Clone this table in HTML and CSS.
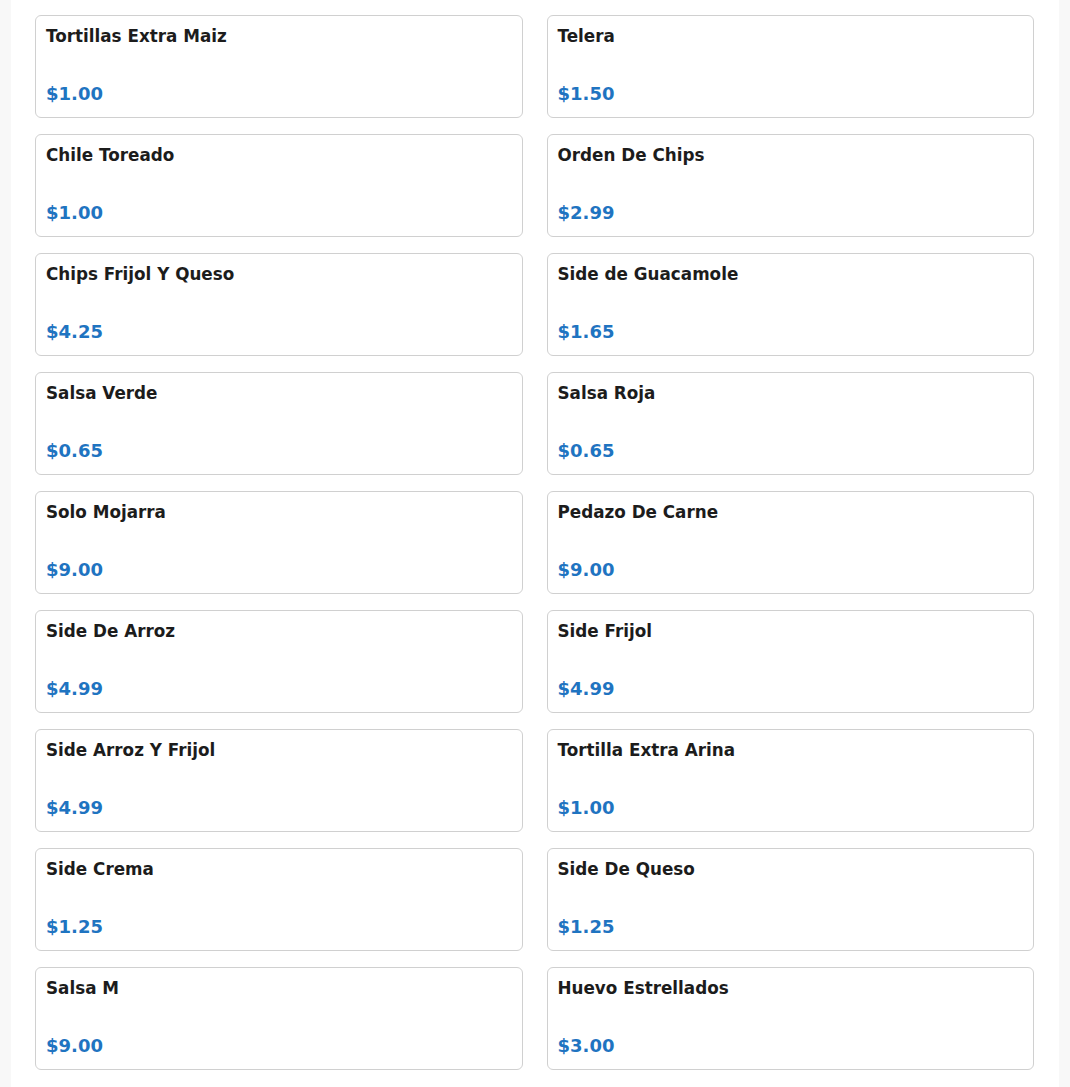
FILE: index.html
```html
<!DOCTYPE html>
<html>
<head>
<meta charset="utf-8">
<link rel="stylesheet" href="styles.css">
</head>
<body>
<div class="page">
  <div class="grid">
    <div class="card"><div class="name">Tortillas Extra Maiz</div><div class="price">$1.00</div></div>
    <div class="card"><div class="name">Telera</div><div class="price">$1.50</div></div>
    <div class="card"><div class="name">Chile Toreado</div><div class="price">$1.00</div></div>
    <div class="card"><div class="name">Orden De Chips</div><div class="price">$2.99</div></div>
    <div class="card"><div class="name">Chips Frijol Y Queso</div><div class="price">$4.25</div></div>
    <div class="card"><div class="name">Side de Guacamole</div><div class="price">$1.65</div></div>
    <div class="card"><div class="name">Salsa Verde</div><div class="price">$0.65</div></div>
    <div class="card"><div class="name">Salsa Roja</div><div class="price">$0.65</div></div>
    <div class="card"><div class="name">Solo Mojarra</div><div class="price">$9.00</div></div>
    <div class="card"><div class="name">Pedazo De Carne</div><div class="price">$9.00</div></div>
    <div class="card"><div class="name">Side De Arroz</div><div class="price">$4.99</div></div>
    <div class="card"><div class="name">Side Frijol</div><div class="price">$4.99</div></div>
    <div class="card"><div class="name">Side Arroz Y Frijol</div><div class="price">$4.99</div></div>
    <div class="card"><div class="name">Tortilla Extra Arina</div><div class="price">$1.00</div></div>
    <div class="card"><div class="name">Side Crema</div><div class="price">$1.25</div></div>
    <div class="card"><div class="name">Side De Queso</div><div class="price">$1.25</div></div>
    <div class="card"><div class="name">Salsa M</div><div class="price">$9.00</div></div>
    <div class="card"><div class="name">Huevo Estrellados</div><div class="price">$3.00</div></div>
  </div>
</div>
</body>
</html>
```
FILE: styles.css
```css
html, body {
  margin: 0;
  padding: 0;
  background: #f8f8f8;
  font-family: "DejaVu Sans", sans-serif;
}
.page {
  margin: 0 11px;
  background: #ffffff;
  padding: 15px 25px 20px 24px;
  min-height: 1100px;
}
.grid {
  display: grid;
  grid-template-columns: 1fr 1fr;
  column-gap: 24px;
  row-gap: 16px;
}
.card {
  border: 1px solid #d0d0d0;
  border-radius: 6px;
  padding: 10px 10px 13px 10px;
  height: 78px;
  display: flex;
  flex-direction: column;
  justify-content: space-between;
}
.name {
  font-weight: bold;
  font-size: 16.8px;
  line-height: 20px;
  color: #1c1c1c;
}
.price {
  font-weight: bold;
  font-size: 18px;
  line-height: 20px;
  color: #1f74c1;
}
```
